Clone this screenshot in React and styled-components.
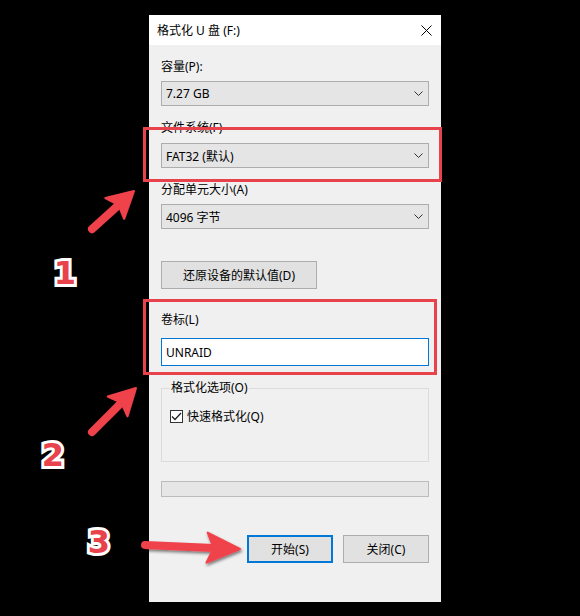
import React from "react";
import styled, { createGlobalStyle } from "styled-components";

const Global = createGlobalStyle`
  html, body { margin: 0; padding: 0; background: #000; }
  #root { width: 580px; height: 616px; }
`;

const FONT = `"Segoe UI", "Noto Sans", "Noto Sans CJK SC", sans-serif`;

const Page = styled.div`
  position: relative;
  width: 580px;
  height: 616px;
  background: #000;
  display: flex;
  align-items: flex-start;
  padding: 15px 0 0 149px;
  box-sizing: border-box;
  overflow: hidden;
  font-family: ${FONT};
`;

const Dialog = styled.div`
  width: 292px;
  height: 587px;
  background: #f0f0f0;
  display: flex;
  flex-direction: column;
`;

const TitleBar = styled.div`
  height: 30px;
  background: #fff;
  display: flex;
  align-items: center;
  justify-content: space-between;
  padding: 0 9px 0 8px;
  font-size: 12px;
  color: #000;
`;

const Body = styled.div`
  display: flex;
  flex-direction: column;
  padding: 0 12px;
`;

const Label = styled.div`
  margin-top: ${(p) => p.$mt}px;
  height: 16px;
  line-height: 16px;
  font-size: 12px;
  color: #000;
`;

const Combo = styled.div`
  margin-top: ${(p) => p.$mt}px;
  height: 25px;
  box-sizing: border-box;
  border: 1px solid #adadad;
  background: #e5e5e5;
  display: flex;
  align-items: center;
  justify-content: space-between;
  padding: 0 5px 0 4px;
  font-size: 12px;
  color: #000;
`;

const Button = styled.div`
  margin-top: ${(p) => p.$mt || 0}px;
  width: ${(p) => p.$w}px;
  height: 28px;
  box-sizing: border-box;
  border: ${(p) => (p.$primary ? "2px solid #0078d7" : "1px solid #adadad")};
  background: #e1e1e1;
  display: flex;
  align-items: center;
  justify-content: center;
  font-size: 12px;
  color: #000;
`;

const TextBox = styled.div`
  margin-top: ${(p) => p.$mt}px;
  height: 28px;
  box-sizing: border-box;
  border: 1px solid #0078d7;
  background: #fff;
  display: flex;
  align-items: center;
  padding-left: 4px;
  font-size: 12px;
  color: #000;
`;

const Group = styled.fieldset`
  margin: ${(p) => p.$mt}px 0 0 0;
  padding: 11px 8px 0 8px;
  height: 82px;
  box-sizing: border-box;
  border: 1px solid #dcdcdc;
  min-width: 0;
`;

const Legend = styled.legend`
  padding: 0 1px;
  margin-left: 0;
  font-size: 12px;
  line-height: 16px;
  color: #000;
`;

const CheckRow = styled.div`
  display: flex;
  align-items: center;
  gap: 4px;
  font-size: 12px;
  color: #000;
`;

const CheckBox = styled.div`
  width: 13px;
  height: 13px;
  box-sizing: border-box;
  border: 1px solid #333;
  background: #fff;
  display: flex;
  align-items: center;
  justify-content: center;
`;

const Progress = styled.div`
  margin-top: ${(p) => p.$mt}px;
  height: 16px;
  box-sizing: border-box;
  border: 1px solid #bcbcbc;
  background: #e6e6e6;
`;

const ButtonRow = styled.div`
  margin-top: ${(p) => p.$mt}px;
  display: flex;
  justify-content: flex-end;
  gap: 10px;
`;

const RedBox = styled.div`
  position: absolute;
  left: ${(p) => p.$x}px;
  top: ${(p) => p.$y}px;
  width: ${(p) => p.$w}px;
  height: ${(p) => p.$h}px;
  box-sizing: border-box;
  border: 3px solid #e8434c;
  pointer-events: none;
`;

const Number = styled.div`
  position: absolute;
  left: ${(p) => p.$x}px;
  top: ${(p) => p.$y}px;
  transform: translate(-50%, -50%);
  font-family: "DejaVu Sans", Lato, sans-serif;
  font-weight: 700;
  font-size: 32px;
  line-height: 1;
  color: #e8434c;
  -webkit-text-stroke: 6px #fff;
  paint-order: stroke fill;
`;

const Overlay = styled.svg`
  position: absolute;
  left: 0;
  top: 0;
  pointer-events: none;
`;

const Chevron = () => (
  <svg width="9" height="5" viewBox="0 0 9 5">
    <path d="M0.5 0.5 L4.5 4.5 L8.5 0.5" fill="none" stroke="#333" strokeWidth="1" />
  </svg>
);

function arrow(ax, ay, bx, by, headLen, headW, shaft) {
  const dx = bx - ax;
  const dy = by - ay;
  const len = Math.hypot(dx, dy);
  const ux = dx / len;
  const uy = dy / len;
  const nx = -uy;
  const ny = ux;
  const baseX = bx - ux * headLen;
  const baseY = by - uy * headLen;
  const notchX = bx - ux * headLen * 0.8;
  const notchY = by - uy * headLen * 0.8;
  const head = [
    [bx, by],
    [baseX + nx * headW, baseY + ny * headW],
    [notchX, notchY],
    [baseX - nx * headW, baseY - ny * headW],
  ]
    .map((p) => p.join(","))
    .join(" ");
  return { line: [ax, ay, notchX, notchY], head, shaft };
}

const arrows = [
  arrow(92, 229, 134, 191, 26, 14, 8),
  arrow(92, 432, 136, 388, 26, 14, 8),
  arrow(145, 545, 240, 549, 33, 15, 8),
];

export default function App() {
  return (
    <>
      <Global />
      <Page>
        <Dialog>
          <TitleBar>
            <span>格式化 U 盘 (F:)</span>
            <svg width="11" height="11" viewBox="0 0 11 11">
              <path d="M0.5 0.5 L10.5 10.5 M10.5 0.5 L0.5 10.5" stroke="#000" strokeWidth="1" />
            </svg>
          </TitleBar>
          <Body>
            <Label $mt={14}>容量(P):</Label>
            <Combo $mt={6}>
              <span>7.27 GB</span>
              <Chevron />
            </Combo>
            <Label $mt={14}>文件系统(F)</Label>
            <Combo $mt={7}>
              <span>FAT32 (默认)</span>
              <Chevron />
            </Combo>
            <Label $mt={14}>分配单元大小(A)</Label>
            <Combo $mt={6}>
              <span>4096 字节</span>
              <Chevron />
            </Combo>
            <Button $mt={32} $w={156}>还原设备的默认值(D)</Button>
            <Label $mt={23}>卷标(L)</Label>
            <TextBox $mt={10}>UNRAID</TextBox>
            <Group $mt={14}>
              <Legend>格式化选项(O)</Legend>
              <CheckRow>
                <CheckBox>
                  <svg width="11" height="9" viewBox="0 0 11 9">
                    <path d="M1 4.5 L4 7.5 L10 1" fill="none" stroke="#222" strokeWidth="1.3" />
                  </svg>
                </CheckBox>
                <span>快速格式化(Q)</span>
              </CheckRow>
            </Group>
            <Progress $mt={19} />
            <ButtonRow $mt={38}>
              <Button $w={86} $primary>开始(S)</Button>
              <Button $w={86}>关闭(C)</Button>
            </ButtonRow>
          </Body>
        </Dialog>

        <RedBox $x={143} $y={127} $w={299} $h={55} />
        <RedBox $x={143} $y={299} $w={294} $h={76} />

        <Overlay width="580" height="616" viewBox="0 0 580 616">
          <defs>
            <filter id="sh" x="-20%" y="-20%" width="140%" height="140%">
              <feDropShadow dx="1" dy="2" stdDeviation="1.5" floodColor="#000" floodOpacity="0.5" />
            </filter>
          </defs>
          {arrows.map((a, i) => (
            <g key={i} filter="url(#sh)" fill="#f0424b" stroke="#f0424b">
              <line
                x1={a.line[0]}
                y1={a.line[1]}
                x2={a.line[2]}
                y2={a.line[3]}
                strokeWidth={a.shaft}
                strokeLinecap="round"
              />
              <polygon points={a.head} strokeWidth="2" strokeLinejoin="round" />
            </g>
          ))}
        </Overlay>

        <Number $x={65} $y={273}>1</Number>
        <Number $x={53} $y={455}>2</Number>
        <Number $x={99} $y={542}>3</Number>
      </Page>
    </>
  );
}
